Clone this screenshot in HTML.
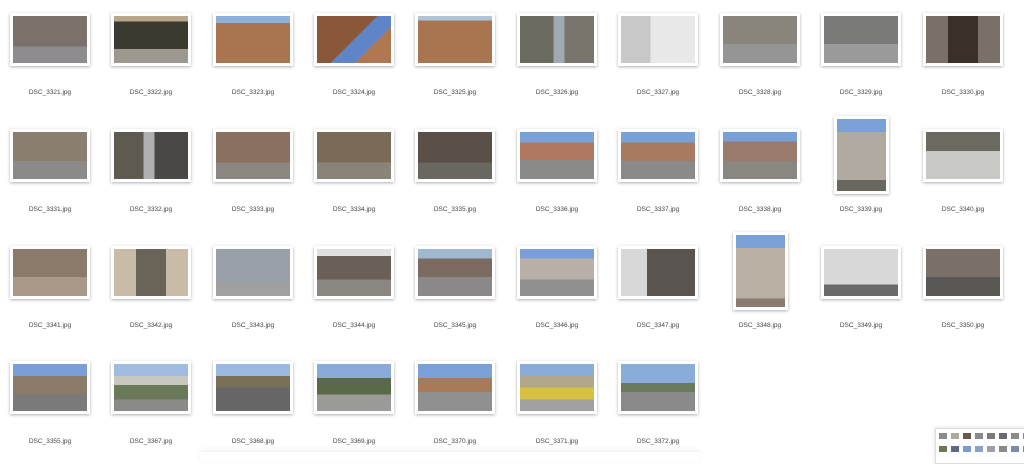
<!DOCTYPE html>
<html><head><meta charset="utf-8"><style>
html,body{margin:0;padding:0;width:1024px;height:458px;overflow:hidden;background:#fff;font-family:"Liberation Sans",sans-serif}
.t{position:absolute;background:#fff;padding:3px;box-shadow:0 1px 3px rgba(0,0,0,.32)}
.i{width:74px;height:47px}
.p .i{width:49px;height:72px}
.l{position:absolute;width:100px;text-align:center;font-size:6.5px;color:#444}
.mini{position:absolute;left:935px;top:428px;width:95px;height:34px;background:#fff;border:1px solid #ddd;box-shadow:0 0 4px rgba(0,0,0,.15)}
.mini span{position:absolute;width:8px;height:6px;background:#8a8a8a}
</style></head><body>
<!-- row1 -->
<div class="t" style="left:10px;top:13px"><div class="i" style="background:linear-gradient(#7a716a 0 65%,#8e8c8e 65%)"></div></div>
<div class="t" style="left:111px;top:13px"><div class="i" style="background:linear-gradient(#b8a68a 0 12%,#3a3a30 12% 70%,#9c9890 70%)"></div></div>
<div class="t" style="left:213px;top:13px"><div class="i" style="background:linear-gradient(#8fb0d8 0 15%,#a8754f 15%)"></div></div>
<div class="t" style="left:314px;top:13px"><div class="i" style="background:linear-gradient(135deg,#8a5838 0 50%,#5f85c8 50% 70%,#b07850 70%)"></div></div>
<div class="t" style="left:415px;top:13px"><div class="i" style="background:linear-gradient(#b0c4d8 0 10%,#a87550 10%)"></div></div>
<div class="t" style="left:517px;top:13px"><div class="i" style="background:linear-gradient(90deg,#6a6a5e 0 45%,#a0a8b0 45% 60%,#7a756c 60%)"></div></div>
<div class="t" style="left:618px;top:13px"><div class="i" style="background:linear-gradient(90deg,#c8c8c8 0 40%,#e8e8e8 40%)"></div></div>
<div class="t" style="left:720px;top:13px"><div class="i" style="background:linear-gradient(#8a857c 0 60%,#959595 60%)"></div></div>
<div class="t" style="left:821px;top:13px"><div class="i" style="background:linear-gradient(#7a7a78 0 60%,#9a9a9a 60%)"></div></div>
<div class="t" style="left:923px;top:13px"><div class="i" style="background:linear-gradient(90deg,#7a7068 0 30%,#3a3028 30% 70%,#7a7068 70%)"></div></div>
<div class="l" style="left:0px;top:89px">DSC_3321.jpg</div>
<div class="l" style="left:101px;top:89px">DSC_3322.jpg</div>
<div class="l" style="left:203px;top:89px">DSC_3323.jpg</div>
<div class="l" style="left:304px;top:89px">DSC_3324.jpg</div>
<div class="l" style="left:405px;top:89px">DSC_3325.jpg</div>
<div class="l" style="left:507px;top:89px">DSC_3326.jpg</div>
<div class="l" style="left:608px;top:89px">DSC_3327.jpg</div>
<div class="l" style="left:710px;top:89px">DSC_3328.jpg</div>
<div class="l" style="left:811px;top:89px">DSC_3329.jpg</div>
<div class="l" style="left:913px;top:89px">DSC_3330.jpg</div>
<!-- row2 -->
<div class="t" style="left:10px;top:129px"><div class="i" style="background:linear-gradient(#8a7e70 0 62%,#8c8a88 62%)"></div></div>
<div class="t" style="left:111px;top:129px"><div class="i" style="background:linear-gradient(90deg,#5e5a50 0 40%,#b0b0b0 40% 55%,#4a4844 55%)"></div></div>
<div class="t" style="left:213px;top:129px"><div class="i" style="background:linear-gradient(#8a7060 0 65%,#8c8680 65%)"></div></div>
<div class="t" style="left:314px;top:129px"><div class="i" style="background:linear-gradient(#7a6a58 0 65%,#8a8478 65%)"></div></div>
<div class="t" style="left:415px;top:129px"><div class="i" style="background:linear-gradient(#5a5048 0 65%,#6a6660 65%)"></div></div>
<div class="t" style="left:517px;top:129px"><div class="i" style="background:linear-gradient(#7aa0d8 0 22%,#b07860 22% 60%,#8a8a88 60%)"></div></div>
<div class="t" style="left:618px;top:129px"><div class="i" style="background:linear-gradient(#7aa0d8 0 22%,#a87a62 22% 62%,#8a8a88 62%)"></div></div>
<div class="t" style="left:720px;top:129px"><div class="i" style="background:linear-gradient(#7aa0d8 0 20%,#9a7a6a 20% 62%,#8a8680 62%)"></div></div>
<div class="t p" style="left:834px;top:116px"><div class="i" style="background:linear-gradient(#7aa0d8 0 18%,#b0aaa0 18% 85%,#6a6660 85%)"></div></div>
<div class="t" style="left:923px;top:129px"><div class="i" style="background:linear-gradient(#6a6a5e 0 40%,#c8c8c4 40%)"></div></div>
<div class="l" style="left:0px;top:206px">DSC_3331.jpg</div>
<div class="l" style="left:101px;top:206px">DSC_3332.jpg</div>
<div class="l" style="left:203px;top:206px">DSC_3333.jpg</div>
<div class="l" style="left:304px;top:206px">DSC_3334.jpg</div>
<div class="l" style="left:405px;top:206px">DSC_3335.jpg</div>
<div class="l" style="left:507px;top:206px">DSC_3336.jpg</div>
<div class="l" style="left:608px;top:206px">DSC_3337.jpg</div>
<div class="l" style="left:710px;top:206px">DSC_3338.jpg</div>
<div class="l" style="left:811px;top:206px">DSC_3339.jpg</div>
<div class="l" style="left:913px;top:206px">DSC_3340.jpg</div>
<!-- row3 -->
<div class="t" style="left:10px;top:246px"><div class="i" style="background:linear-gradient(#8a7a6a 0 60%,#a89888 60%)"></div></div>
<div class="t" style="left:111px;top:246px"><div class="i" style="background:linear-gradient(90deg,#c8bca8 0 30%,#6a6458 30% 70%,#c8bca8 70%)"></div></div>
<div class="t" style="left:213px;top:246px"><div class="i" style="background:linear-gradient(#9aa0a8 0 70%,#a0a0a0 70%)"></div></div>
<div class="t" style="left:314px;top:246px"><div class="i" style="background:linear-gradient(#e0e0e0 0 15%,#6a6058 15% 65%,#8a8680 65%)"></div></div>
<div class="t" style="left:415px;top:246px"><div class="i" style="background:linear-gradient(#a0b8d0 0 20%,#7a6a60 20% 60%,#8a8888 60%)"></div></div>
<div class="t" style="left:517px;top:246px"><div class="i" style="background:linear-gradient(#7a9ed8 0 20%,#b8b0a8 20% 65%,#909090 65%)"></div></div>
<div class="t" style="left:618px;top:246px"><div class="i" style="background:linear-gradient(90deg,#d8d8d8 0 35%,#5a5450 35%)"></div></div>
<div class="t p" style="left:733px;top:232px"><div class="i" style="background:linear-gradient(#7aa0d8 0 18%,#bab0a4 18% 88%,#8a7a70 88%)"></div></div>
<div class="t" style="left:821px;top:246px"><div class="i" style="background:linear-gradient(#d8d8d8 0 75%,#6a6a6a 75%)"></div></div>
<div class="t" style="left:923px;top:246px"><div class="i" style="background:linear-gradient(#7a7068 0 60%,#5a5854 60%)"></div></div>
<div class="l" style="left:0px;top:322px">DSC_3341.jpg</div>
<div class="l" style="left:101px;top:322px">DSC_3342.jpg</div>
<div class="l" style="left:203px;top:322px">DSC_3343.jpg</div>
<div class="l" style="left:304px;top:322px">DSC_3344.jpg</div>
<div class="l" style="left:405px;top:322px">DSC_3345.jpg</div>
<div class="l" style="left:507px;top:322px">DSC_3346.jpg</div>
<div class="l" style="left:608px;top:322px">DSC_3347.jpg</div>
<div class="l" style="left:710px;top:322px">DSC_3348.jpg</div>
<div class="l" style="left:811px;top:322px">DSC_3349.jpg</div>
<div class="l" style="left:913px;top:322px">DSC_3350.jpg</div>
<!-- row4 -->
<div class="t" style="left:10px;top:361px"><div class="i" style="background:linear-gradient(#7a9ed8 0 25%,#8a7a68 25% 65%,#7a7a7a 65%)"></div></div>
<div class="t" style="left:111px;top:361px"><div class="i" style="background:linear-gradient(#a0bce0 0 25%,#c8c8c0 25% 45%,#6a7a58 45% 75%,#8a8a88 75%)"></div></div>
<div class="t" style="left:213px;top:361px"><div class="i" style="background:linear-gradient(#9ab8e0 0 25%,#7a7058 25% 50%,#666 50%)"></div></div>
<div class="t" style="left:314px;top:361px"><div class="i" style="background:linear-gradient(#8aa8d8 0 30%,#5a6a48 30% 65%,#9a9a98 65%)"></div></div>
<div class="t" style="left:415px;top:361px"><div class="i" style="background:linear-gradient(#7aa0d8 0 30%,#a87a58 30% 60%,#909090 60%)"></div></div>
<div class="t" style="left:517px;top:361px"><div class="i" style="background:linear-gradient(#8aacd8 0 25%,#b0a888 25% 50%,#d8c040 50% 75%,#a0a0a0 75%)"></div></div>
<div class="t" style="left:618px;top:361px"><div class="i" style="background:linear-gradient(#8aacd8 0 40%,#6a7a5a 40% 60%,#8a8a8a 60%)"></div></div>
<div class="l" style="left:0px;top:438px">DSC_3355.jpg</div>
<div class="l" style="left:101px;top:438px">DSC_3367.jpg</div>
<div class="l" style="left:203px;top:438px">DSC_3368.jpg</div>
<div class="l" style="left:304px;top:438px">DSC_3369.jpg</div>
<div class="l" style="left:405px;top:438px">DSC_3370.jpg</div>
<div class="l" style="left:507px;top:438px">DSC_3371.jpg</div>
<div class="l" style="left:608px;top:438px">DSC_3372.jpg</div>
<div style="position:absolute;left:200px;top:452px;width:500px;height:10px;box-shadow:0 -2px 6px rgba(0,0,0,.06)"></div>
<div class="mini">
<span style="left:3px;top:4px"></span><span style="left:15px;top:4px;background:#b0a898"></span><span style="left:27px;top:4px;background:#6a5a48"></span><span style="left:39px;top:4px"></span><span style="left:51px;top:4px;background:#7a7a78"></span><span style="left:63px;top:4px;background:#6a6a70"></span><span style="left:75px;top:4px"></span><span style="left:87px;top:4px"></span>
<span style="left:3px;top:17px;background:#6a7a58"></span><span style="left:15px;top:17px;background:#5a6a80"></span><span style="left:27px;top:17px;background:#7a9ad0"></span><span style="left:39px;top:17px;background:#8aa0c8"></span><span style="left:51px;top:17px;background:#9aa0b0"></span><span style="left:63px;top:17px"></span><span style="left:75px;top:17px;background:#7a8aa8"></span><span style="left:87px;top:17px"></span>
</div>
</body></html>
